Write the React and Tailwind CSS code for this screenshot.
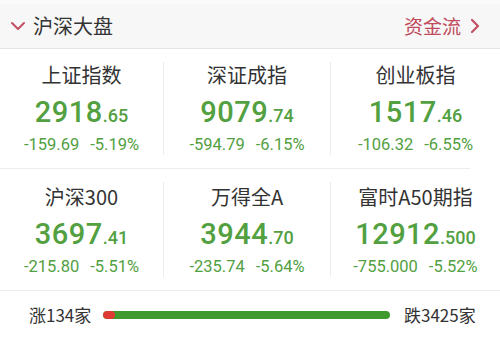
import React from "react";

const cjk = { fontFamily: '"Noto Sans CJK SC", "Noto Sans", sans-serif' };
const num = { fontFamily: 'Roboto, "Liberation Sans", "Noto Sans CJK SC", sans-serif' };

function Cell({ title, main, dec, chg, pct, top }) {
  return (
    <div className={"flex flex-col items-center " + (top ? "pt-[14px] pb-[14px]" : "pt-[16px] pb-[14px]")}>
      <div className="h-[24px] leading-[24px] text-[20px] text-[#333]" style={cjk}>{title}</div>
      <div className="mt-[9px] h-[32px] leading-[32px] text-[#52a03f] font-medium flex items-baseline" style={num}>
        <span className="text-[29px] tracking-[0.5px]">{main}</span>
        <span className="text-[18px]">.{dec}</span>
      </div>
      <div className="mt-[8px] h-[18px] leading-[18px] text-[16.5px] text-[#52a03f] flex gap-[11px]" style={num}>
        <span>{chg}</span>
        <span>{pct}</span>
      </div>
    </div>
  );
}

function Divider() {
  return <div className="w-px bg-[#ececec] my-[13px]" />;
}

export default function App() {
  const row1 = [
    { title: "上证指数", main: "2918", dec: "65", chg: "-159.69", pct: "-5.19%" },
    { title: "深证成指", main: "9079", dec: "74", chg: "-594.79", pct: "-6.15%" },
    { title: "创业板指", main: "1517", dec: "46", chg: "-106.32", pct: "-6.55%" },
  ];
  const row2 = [
    { title: "沪深300", main: "3697", dec: "41", chg: "-215.80", pct: "-5.51%" },
    { title: "万得全A", main: "3944", dec: "70", chg: "-235.74", pct: "-5.64%" },
    { title: "富时A50期指", main: "12912", dec: "500", chg: "-755.000", pct: "-5.52%" },
  ];
  return (
    <div className="w-[500px] h-[339px] bg-white overflow-hidden" style={cjk}>
      <div className="h-[49px] bg-[#f7f7f7] border-b border-[#e3e3e3] border-t-[4px] border-t-[#fbfbfb] flex items-center justify-between pl-[10px] pr-[20px]">
        <div className="flex items-center">
          <svg width="16" height="10" viewBox="0 0 16 10" className="mr-[7px]">
            <path d="M2 2 L8 8 L14 2" fill="none" stroke="#c25062" strokeWidth="2" strokeLinecap="round" strokeLinejoin="round" />
          </svg>
          <span className="text-[20px] text-[#333]">沪深大盘</span>
        </div>
        <div className="flex items-center">
          <span className="text-[19px] text-[#c04a5c]">资金流</span>
          <svg width="10" height="16" viewBox="0 0 10 16" className="ml-[9px]">
            <path d="M2 2 L8 8 L2 14" fill="none" stroke="#c25062" strokeWidth="2.2" strokeLinecap="round" strokeLinejoin="round" />
          </svg>
        </div>
      </div>
      <div className="flex">
        <div className="w-[163px]"><Cell {...row1[0]} top /></div>
        <Divider />
        <div className="w-[166px]"><Cell {...row1[1]} top /></div>
        <Divider />
        <div className="flex-1"><Cell {...row1[2]} top /></div>
      </div>
      <div className="h-px bg-[#ececec] mr-[30px]" />
      <div className="flex">
        <div className="w-[163px]"><Cell {...row2[0]} /></div>
        <Divider />
        <div className="w-[166px]"><Cell {...row2[1]} /></div>
        <Divider />
        <div className="flex-1"><Cell {...row2[2]} /></div>
      </div>
      <div className="h-px bg-[#ececec]" />
      <div className="flex items-center h-[48px] pl-[29px]">
        <span className="text-[17px] text-[#333] w-[74px]">涨134家</span>
        <div className="w-[287px] h-[8px] rounded-full bg-[#3f9a2e] flex overflow-hidden">
          <div className="w-[12px] h-full bg-[#e03a34] rounded-full" />
        </div>
        <span className="ml-[14px] text-[17px] text-[#333]">跌3425家</span>
      </div>
    </div>
  );
}
